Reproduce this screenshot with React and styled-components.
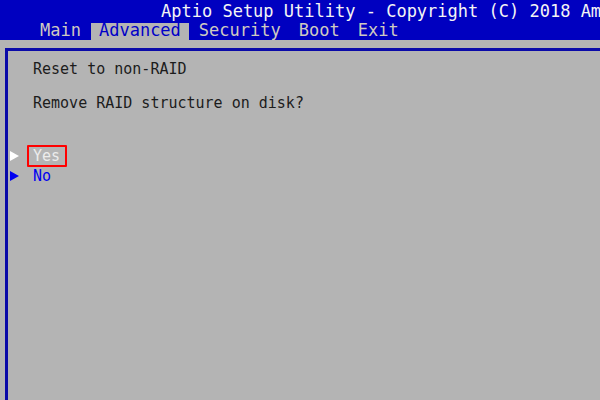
import styled, {createGlobalStyle} from 'styled-components'

const GlobalStyle = createGlobalStyle`
    html, body {
        margin: 0;
        padding: 0;
        background: #b4b4b4;
    }
    body {
        width: 600px;
        height: 400px;
        overflow: hidden;
        font-family: "DejaVu Sans Mono", "Liberation Mono", monospace;
    }
`

const Screen = styled.div`
    width: 600px;
    height: 400px;
    display: flex;
    flex-direction: column;
    background: #b4b4b4;
`

const Header = styled.div`
    background: #0000c0;
    height: 40px;
    padding-top: 1px;
    box-sizing: border-box;
    display: flex;
    flex-direction: column;
`

const Title = styled.div`
    height: 20px;
    line-height: 20px;
    font-size: 17px;
    color: #f4f4f4;
    padding-left: 161px;
    white-space: nowrap;
    overflow: hidden;
`

const TabRow = styled.div`
    display: flex;
    gap: 2px;
    margin-top: 2px;
    padding-left: 32px;
    flex: 1;
`

const Tab = styled.div`
    padding: 0 8px;
    font-size: 17px;
    line-height: 15px;
    white-space: nowrap;
    color: ${props => props.active ? '#0000c8' : '#cfcac0'};
    background: ${props => props.active ? '#b4b4b4' : 'transparent'};
`

const Panel = styled.div`
    flex: 1;
    margin: 8px 0 0 5px;
    border-top: 3px solid #0a0aa8;
    border-left: 3px solid #0a0aa8;
    padding: 9px 0 0 2px;
    font-size: 15px;
    line-height: 18px;
    color: #1c1c1c;
`

const Line = styled.div`
    padding-left: 23px;
    margin-bottom: ${props => props.gap || 0}px;
`

const Options = styled.div`
    display: flex;
    flex-direction: column;
`

const Option = styled.div`
    height: 20px;
    display: flex;
    align-items: center;
    gap: 8px;
    color: ${props => props.selected ? '#ececec' : '#0000f0'};
`

const Marker = styled.span`
    width: 0;
    height: 0;
    border-top: 5px solid transparent;
    border-bottom: 5px solid transparent;
    border-left: 9px solid ${props => props.selected ? '#ffffff' : '#0000f0'};
`

const Label = styled.span`
    display: inline-block;
    height: 22px;
    box-sizing: border-box;
    margin: -1px 0;
    padding: 0 5px 0 4px;
    border: 2px solid ${props => props.selected ? '#ff0000' : 'transparent'};
    border-radius: 1px;
    line-height: 18px;
`

function App() {
    const tabs = ['Main', 'Advanced', 'Security', 'Boot', 'Exit']
    const options = [
        {label: 'Yes', selected: true},
        {label: 'No', selected: false},
    ]

    return (
        <Screen>
            <GlobalStyle />
            <Header>
                <Title>Aptio Setup Utility - Copyright (C) 2018 American Megatrends, Inc.</Title>
                <TabRow>
                    {tabs.map(t => <Tab key={t} active={t === 'Advanced'}>{t}</Tab>)}
                </TabRow>
            </Header>
            <Panel>
                <Line gap={16}>Reset to non-RAID</Line>
                <Line gap={34}>Remove RAID structure on disk?</Line>
                <Options>
                    {options.map(o => (
                        <Option key={o.label} selected={o.selected}>
                            <Marker selected={o.selected} />
                            <Label selected={o.selected}>{o.label}</Label>
                        </Option>
                    ))}
                </Options>
            </Panel>
        </Screen>
    )
}

export default App
